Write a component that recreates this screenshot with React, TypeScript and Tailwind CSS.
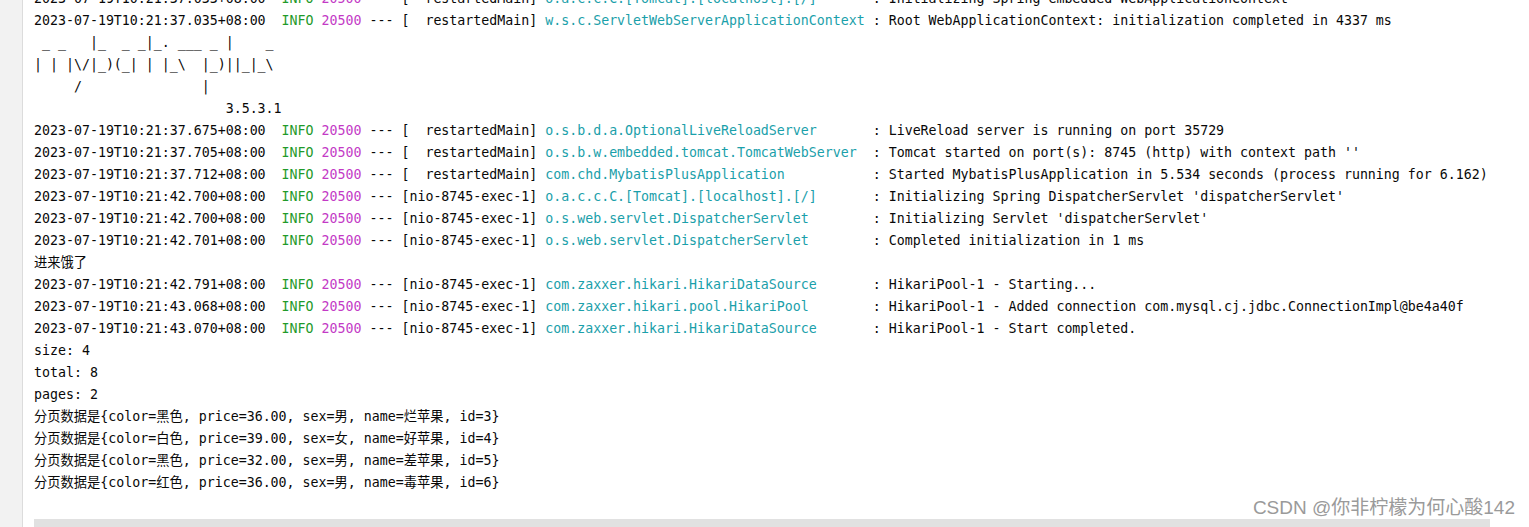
import React from "react"

type LogLine = {
  ts: string
  thread: string
  logger: string
  msg: string
}

const log = (ts: string, thread: string, logger: string, msg: string): LogLine => ({ ts, thread, logger, msg })

const MAIN = "  restartedMain"
const EXEC = "nio-8745-exec-1"

// one row of console output: either a spring log line or a plain string
type Row = { kind: "log"; line: LogLine } | { kind: "plain"; text: string }

const rows: Row[] = [
  { kind: "log", line: log("2023-07-19T10:21:37.033+08:00", MAIN, "o.a.c.c.C.[Tomcat].[localhost].[/]", "Initializing Spring embedded WebApplicationContext") },
  { kind: "log", line: log("2023-07-19T10:21:37.035+08:00", MAIN, "w.s.c.ServletWebServerApplicationContext", "Root WebApplicationContext: initialization completed in 4337 ms") },
  { kind: "plain", text: " _ _   |_  _ _|_. ___ _ |    _ " },
  { kind: "plain", text: "| | |\\/|_)(_| | |_\\  |_)||_|_\\ " },
  { kind: "plain", text: "     /               |         " },
  { kind: "plain", text: "                        3.5.3.1 " },
  { kind: "log", line: log("2023-07-19T10:21:37.675+08:00", MAIN, "o.s.b.d.a.OptionalLiveReloadServer", "LiveReload server is running on port 35729") },
  { kind: "log", line: log("2023-07-19T10:21:37.705+08:00", MAIN, "o.s.b.w.embedded.tomcat.TomcatWebServer", "Tomcat started on port(s): 8745 (http) with context path ''") },
  { kind: "log", line: log("2023-07-19T10:21:37.712+08:00", MAIN, "com.chd.MybatisPlusApplication", "Started MybatisPlusApplication in 5.534 seconds (process running for 6.162)") },
  { kind: "log", line: log("2023-07-19T10:21:42.700+08:00", EXEC, "o.a.c.c.C.[Tomcat].[localhost].[/]", "Initializing Spring DispatcherServlet 'dispatcherServlet'") },
  { kind: "log", line: log("2023-07-19T10:21:42.700+08:00", EXEC, "o.s.web.servlet.DispatcherServlet", "Initializing Servlet 'dispatcherServlet'") },
  { kind: "log", line: log("2023-07-19T10:21:42.701+08:00", EXEC, "o.s.web.servlet.DispatcherServlet", "Completed initialization in 1 ms") },
  { kind: "plain", text: "进来饿了" },
  { kind: "log", line: log("2023-07-19T10:21:42.791+08:00", EXEC, "com.zaxxer.hikari.HikariDataSource", "HikariPool-1 - Starting...") },
  { kind: "log", line: log("2023-07-19T10:21:43.068+08:00", EXEC, "com.zaxxer.hikari.pool.HikariPool", "HikariPool-1 - Added connection com.mysql.cj.jdbc.ConnectionImpl@be4a40f") },
  { kind: "log", line: log("2023-07-19T10:21:43.070+08:00", EXEC, "com.zaxxer.hikari.HikariDataSource", "HikariPool-1 - Start completed.") },
  { kind: "plain", text: "size: 4" },
  { kind: "plain", text: "total: 8" },
  { kind: "plain", text: "pages: 2" },
  { kind: "plain", text: "分页数据是{color=黑色, price=36.00, sex=男, name=烂苹果, id=3}" },
  { kind: "plain", text: "分页数据是{color=白色, price=39.00, sex=女, name=好苹果, id=4}" },
  { kind: "plain", text: "分页数据是{color=黑色, price=32.00, sex=男, name=差苹果, id=5}" },
  { kind: "plain", text: "分页数据是{color=红色, price=36.00, sex=男, name=毒苹果, id=6}" },
]

function LogRow({ line }: { line: LogLine }) {
  return (
    <div className="h-[22px] leading-[22px] whitespace-pre">
      {line.ts}
      {"  "}
      <span className="text-[#1f9a2a]">INFO</span> <span className="text-[#c33ac6]">20500</span> --- [{line.thread}]{" "}
      <span className="text-[#1aa0aa]">{line.logger.padEnd(40, " ")}</span> : {line.msg}
    </div>
  )
}

export default function App() {
  return (
    <div className="relative flex h-[527px] w-full overflow-hidden bg-white">
      {/* gutter */}
      <div className="w-[23px] shrink-0 border-r border-[#dcdcdc] bg-[#f2f2f2]" />

      <div
        className="flex flex-col pl-[11px] text-[13.28px] text-[#080808]"
        style={{ fontFamily: '"DejaVu Sans Mono", "Noto Sans CJK SC", monospace' }}
      >
        <div className="-mt-[12px]">
          {rows.map((r, i) =>
            r.kind === "log" ? (
              <LogRow key={i} line={r.line} />
            ) : (
              <div key={i} className="h-[22px] leading-[22px] whitespace-pre">
                {r.text}
              </div>
            )
          )}
        </div>

        {/* horizontal scrollbar track */}
        <div className="mt-[25px] h-[8px] w-[1456px] bg-[#e1e1e1]" />
      </div>

      {/* watermark */}
      <div
        className="absolute right-[14px] bottom-[8px] text-[19px] leading-[22px] text-[#9a9a9a] [text-shadow:0_0_1px_#ffffff]"
        style={{ fontFamily: '"Liberation Sans", "Noto Sans CJK SC", sans-serif' }}
      >
        CSDN @你非柠檬为何心酸142
      </div>
    </div>
  )
}
